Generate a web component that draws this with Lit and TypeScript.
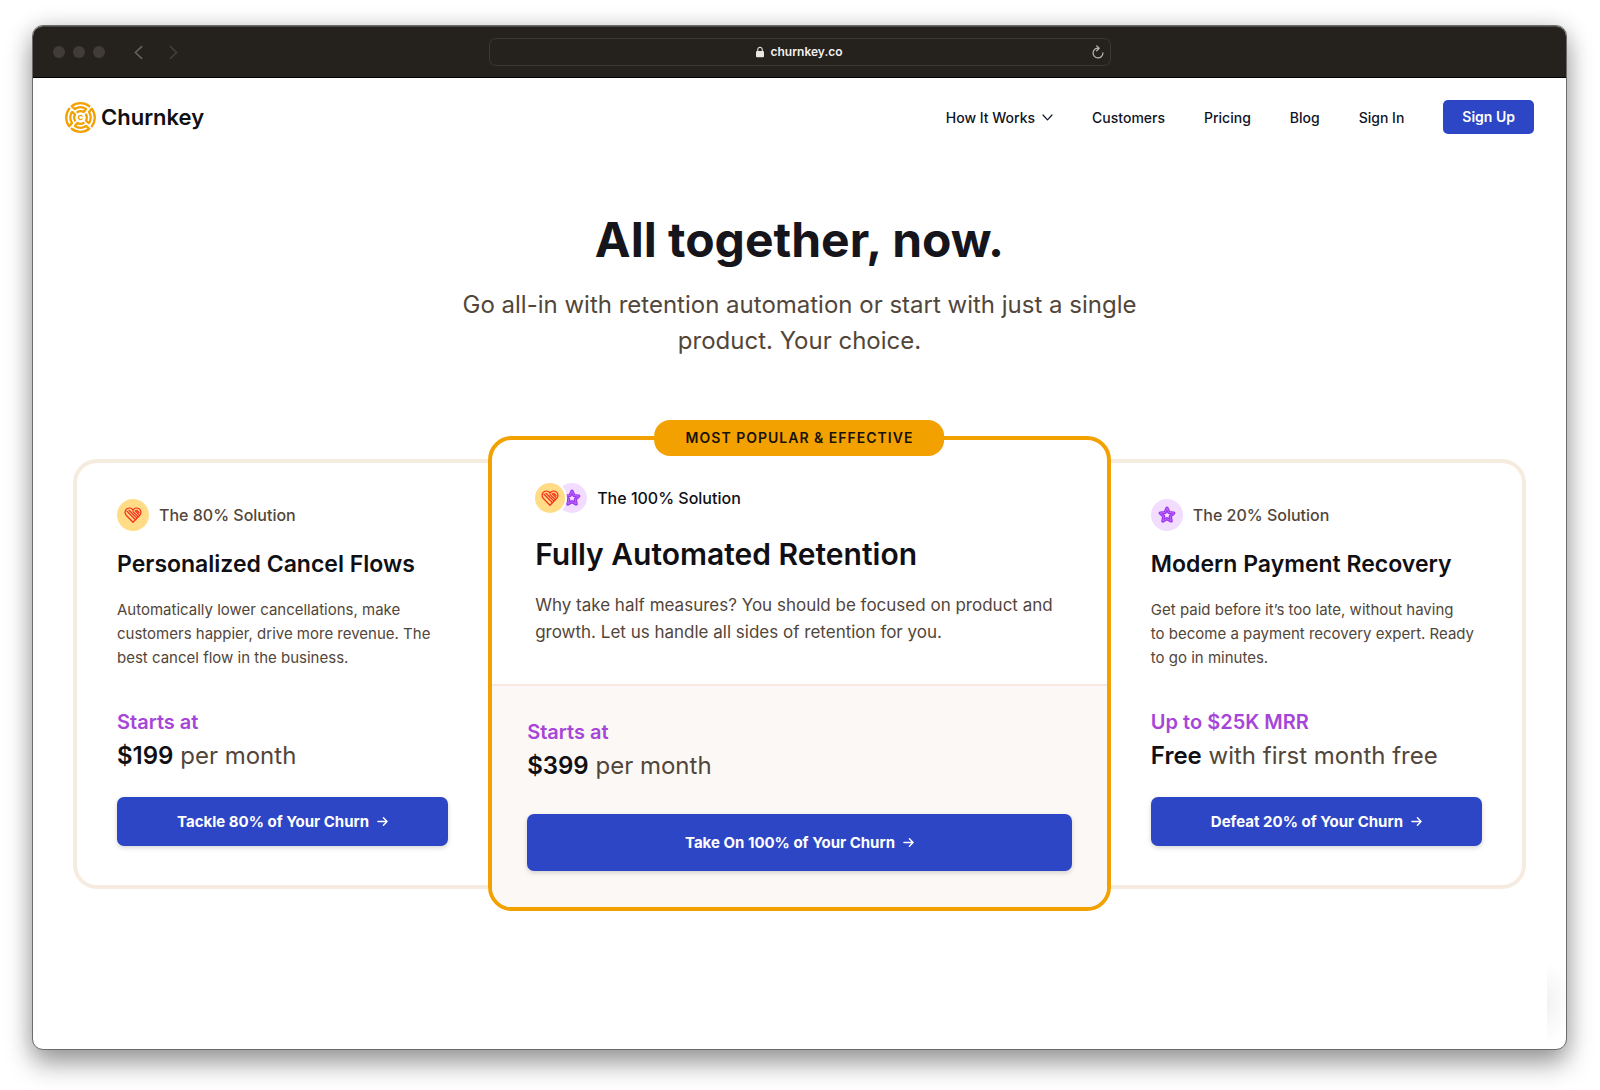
import { LitElement, html, css, svg, nothing } from "lit";
import { customElement, property } from "lit/decorators.js";

type IconName = "heart" | "star";

interface Plan {
  icons: IconName[];
  label: string;
  title: string;
  text: string;
  note: string;
  price: string;
  terms: string;
  action: string;
  featured?: boolean;
}

const PLANS: Plan[] = [
  {
    icons: ["heart"],
    label: "The 80% Solution",
    title: "Personalized Cancel Flows",
    text: "Automatically lower cancellations, make customers happier, drive more revenue. The best cancel flow in the business.",
    note: "Starts at",
    price: "$199",
    terms: "per month",
    action: "Tackle 80% of Your Churn",
  },
  {
    icons: ["heart", "star"],
    label: "The 100% Solution",
    title: "Fully Automated Retention",
    text: "Why take half measures? You should be focused on product and growth. Let us handle all sides of retention for you.",
    note: "Starts at",
    price: "$399",
    terms: "per month",
    action: "Take On 100% of Your Churn",
    featured: true,
  },
  {
    icons: ["star"],
    label: "The 20% Solution",
    title: "Modern Payment Recovery",
    text: "Get paid before it’s too late, without having to\u00a0become a payment recovery expert. Ready to\u00a0go in minutes.",
    note: "Up to $25K MRR",
    price: "Free",
    terms: "with first month free",
    action: "Defeat 20% of Your Churn",
  },
];

const heart = svg`
  <g fill="none" stroke="#f5331f" stroke-width="1.3" stroke-linecap="round" stroke-linejoin="round">
    <path d="M9 16.2 2.2 9.2C.4 7.2.8 4 3 2.7 5 1.5 7.6 2 9 4.2c1.4-2.2 4-2.7 6-1.5 2.200 1.300 2.600 4.500.8 6.500z"/>
    <path d="M3 5.200 11 13.200M5 4.200l7.500 7.400M9 5.600l4.800 4.700M11.200 4.700l3.600 3.700M12.800 4.200l2.400 2.400"/>
  </g>`;

const star = svg`
  <g fill="none" stroke-linejoin="round">
    <path d="M9 2.200l1.900 4.300 4.900.5-3.600 3.200 1 4.800L9 12.600 4.800 15l1-4.800L2.200 7l4.900-.5z" stroke="#9d35f0" stroke-width="3.200"/>
    <path d="M9 2.200l1.900 4.300 4.900.5-3.600 3.200 1 4.800L9 12.600 4.800 15l1-4.800L2.200 7l4.900-.5z" stroke="#c98bf8" stroke-width=".6"/>
    <circle cx="9" cy="9.300" r="1.700" fill="#f3dcff"/>
  </g>`;

@customElement("plan-icon")
export class PlanIcon extends LitElement {
  @property() name: IconName = "heart";

  static styles = css`
    :host {
      display: grid;
      place-items: center;
      border-radius: 50%;
    }
    :host([name="heart"]) {
      background: #ffdc85;
    }
    :host([name="star"]) {
      background: #f2dcff;
    }
    svg {
      display: block;
      width: 18px;
      height: 18px;
    }
  `;

  render() {
    return html`<svg viewBox="0 0 18 18" aria-hidden="true">${this.name === "heart" ? heart : star}</svg>`;
  }
}

@customElement("plan-card")
export class PlanCard extends LitElement {
  @property({ attribute: false }) plan!: Plan;

  static styles = css`
    :host {
      display: block;
      box-sizing: border-box;
      min-width: 0;
      border: 4px solid #f6ebdf;
      background: #fff;
      color: #52463a;
    }
    :host(.first) {
      border-right: 0;
      border-radius: 24px 0 0 24px;
    }
    :host(.last) {
      border-left: 0;
      border-radius: 0 24px 24px 0;
    }
    :host(.featured) {
      position: relative;
      border-color: #f2a100;
      border-radius: 24px;
    }
    .badge {
      position: absolute;
      top: -20px;
      left: 50%;
      translate: -50% 0;
      box-sizing: border-box;
      padding: 0 31px;
      border-radius: 16px;
      background: #f2a100;
      color: #17130a;
      font-size: 14px;
      font-weight: 600;
      line-height: 36px;
      letter-spacing: 1px;
      white-space: nowrap;
    }
    .about {
      padding: 36px 36px 0 40px;
    }
    .head {
      display: flex;
      align-items: center;
      gap: 10px;
      height: 32px;
    }
    .icons {
      display: flex;
    }
    plan-icon {
      width: 32px;
      height: 32px;
    }
    .label {
      font-size: 16px;
      font-weight: 500;
      line-height: 24px;
    }
    h2 {
      margin: 17px 0 0;
      color: #101014;
      font-size: 23px;
      font-weight: 600;
      line-height: 32px;
    }
    .text {
      margin: 18px 0 0;
      font-size: 15px;
      line-height: 24px;
    }
    .buy {
      padding: 36px 40px 39px;
    }
    .note {
      margin: 0;
      color: #a646d8;
      font-size: 20px;
      font-weight: 600;
      line-height: 32px;
    }
    .price {
      margin: 0;
      font-size: 24px;
      line-height: 36px;
    }
    .price strong {
      color: #101014;
      font-weight: 600;
    }
    .action {
      display: flex;
      align-items: center;
      justify-content: center;
      gap: 8px;
      box-sizing: border-box;
      margin-top: 23px;
      min-height: 49px;
      border-radius: 7px;
      background: #2d46c6;
      box-shadow: 0 2px 5px rgb(0 0 0 / 16%);
      color: #fff;
      font-size: 15px;
      font-weight: 700;
      text-decoration: none;
    }
    .action svg {
      width: 11px;
      height: 11px;
    }

    :host(.featured) .about {
      padding: 43px 40px 38px 43px;
    }
    :host(.featured) .head {
      height: 30px;
    }
    :host(.featured) plan-icon {
      width: 30px;
      height: 30px;
    }
    :host(.featured) plan-icon[name="heart"] {
      z-index: 1;
      box-shadow: 0 0 0 2px #fff;
    }
    :host(.featured) plan-icon[name="star"] {
      margin-left: -8px;
    }
    :host(.featured) .label {
      color: #101014;
    }
    :host(.featured) h2 {
      margin-top: 21px;
      font-size: 30px;
      line-height: 40px;
    }
    :host(.featured) .text {
      font-size: 17px;
      line-height: 27px;
    }
    :host(.featured) .buy {
      padding: 30px 35px 36px;
      border-top: 2px solid #f6e9e1;
      border-radius: 0 0 20px 20px;
      background: #fcf8f5;
    }
    :host(.featured) .action {
      margin-top: 30px;
      min-height: 57px;
    }
  `;

  render() {
    const p = this.plan;
    return html`
      ${p.featured ? html`<div class="badge">MOST POPULAR &amp; EFFECTIVE</div>` : nothing}
      <div class="about">
        <div class="head">
          <div class="icons">${p.icons.map((name) => html`<plan-icon name=${name}></plan-icon>`)}</div>
          <span class="label">${p.label}</span>
        </div>
        <h2>${p.title}</h2>
        <p class="text">${p.text}</p>
      </div>
      <div class="buy">
        <p class="note">${p.note}</p>
        <p class="price"><strong>${p.price}</strong> ${p.terms}</p>
        <a class="action" href="#start">
          ${p.action}
          <svg viewBox="0 0 12 12" fill="none" stroke="currentColor" stroke-width="1.500" stroke-linecap="round" stroke-linejoin="round" aria-hidden="true">
            <path d="M1 6h10M7 2l4 4-4 4" />
          </svg>
        </a>
      </div>
    `;
  }
}

/* One quarter of the logo: a band that folds back twice towards the centre. */
const wing = svg`
  <path d="M23.500 4.100A13.800 13.800 0 0 0 6.500 4.100L9.600 6.800A9.900 9.900 0 0 1 20.400 6.800L18 9.700A6.200 6.200 0 0 0 12 9.700"/>`;

@customElement("app-root")
export class AppRoot extends LitElement {
  static styles = css`
    :host {
      display: block;
      box-sizing: border-box;
      min-height: 100vh;
      padding: 25px 33px 40px 32px;
      background: #fff;
      font-family: Inter, "Liberation Sans", sans-serif;
    }
    .window {
      position: relative;
      display: flex;
      flex-direction: column;
      box-sizing: border-box;
      min-height: calc(100vh - 65px);
      border: 1px solid #6b6b6b;
      border-radius: 11px;
      background: #fff;
      box-shadow: 0 14px 26px rgb(0 0 0 / 36%), 0 0 22px rgb(0 0 0 / 14%);
    }
    .bar {
      display: grid;
      grid-template-columns: 1fr minmax(0, 622px) 1fr;
      align-items: center;
      box-sizing: border-box;
      height: 52px;
      padding: 0 20px;
      border-top: 1px solid #4c4a47;
      border-bottom: 1px solid #000;
      border-radius: 10px 10px 0 0;
      background: #25211c;
    }
    .controls,
    .dots {
      display: flex;
      align-items: center;
    }
    .dots {
      gap: 8px;
      margin-right: 23px;
    }
    .dot {
      width: 12px;
      height: 12px;
      border-radius: 50%;
      background: #423c38;
    }
    .step {
      display: grid;
      place-items: center;
      width: 20px;
      height: 20px;
      margin-right: 15px;
      padding: 0;
      border: 0;
      background: none;
      color: #67625e;
    }
    .step:disabled {
      color: #423e3a;
    }
    .step svg {
      width: 9px;
      height: 15px;
    }
    .address {
      display: grid;
      grid-template-columns: 1fr auto 1fr;
      align-items: center;
      box-sizing: border-box;
      height: 28px;
      padding: 0 4px;
      border: 1px solid #3c3834;
      border-radius: 7px;
    }
    .site {
      grid-column: 2;
      display: flex;
      align-items: center;
      gap: 6px;
      color: #e8e6e4;
    }
    .site svg {
      width: 8px;
      height: 12px;
    }
    .site input {
      field-sizing: content;
      padding: 0;
      border: 0;
      outline: 0;
      background: none;
      color: #f2f0ee;
      font: 600 12px/18px Inter, "Liberation Sans", sans-serif;
    }
    .reload {
      justify-self: end;
      display: grid;
      place-items: center;
      width: 16px;
      height: 20px;
      padding: 0;
      border: 0;
      background: none;
      color: #b5b1ad;
    }
    .reload svg {
      width: 12px;
      height: 14px;
    }
    .header {
      display: flex;
      align-items: center;
      justify-content: space-between;
      padding: 22px 32px;
    }
    .brand {
      display: flex;
      align-items: center;
      gap: 5px;
      color: #101014;
      font-size: 22px;
      font-weight: 600;
      line-height: 34px;
      text-decoration: none;
    }
    .brand svg {
      width: 31px;
      height: 31px;
    }
    .nav {
      display: flex;
      align-items: center;
      gap: 39px;
      color: #101425;
      font-size: 14px;
      font-weight: 500;
    }
    .nav a {
      color: inherit;
      text-decoration: none;
    }
    .nav button {
      display: flex;
      align-items: center;
      gap: 7px;
      padding: 0;
      border: 0;
      background: none;
      color: inherit;
      font: inherit;
    }
    .nav button svg {
      width: 11px;
      height: 7px;
    }
    .nav .signup {
      padding: 0 19px;
      border-radius: 5px;
      background: #2d46c6;
      color: #fff;
      font-weight: 600;
      line-height: 34px;
    }
    .hero {
      padding: 56px 32px 0;
      text-align: center;
    }
    h1 {
      margin: 0;
      color: #15151b;
      font-size: 48px;
      font-weight: 700;
      line-height: 56px;
    }
    .lead {
      max-width: 690px;
      margin: 19px auto 0;
      color: #52463a;
      font-size: 24px;
      line-height: 36px;
    }
    .plans {
      display: grid;
      grid-template-columns: 2fr 3fr 2fr;
      align-items: center;
      padding: 77px 40px 136px;
    }
    .glow {
      position: absolute;
      right: 0;
      bottom: 4px;
      width: 19px;
      height: 84px;
      background: radial-gradient(ellipse 24px 42px at 0 50%, rgb(0 0 0 / 5%), rgb(0 0 0 / 0%));
    }
  `;

  render() {
    return html`
      <div class="window">
        <div class="bar">
          <div class="controls">
            <div class="dots"><span class="dot"></span><span class="dot"></span><span class="dot"></span></div>
            <button class="step" aria-label="Back">
              <svg viewBox="0 0 10 16" fill="none" stroke="currentColor" stroke-width="1.800" stroke-linecap="round" stroke-linejoin="round"><path d="M8.500 1.500 1.500 8l7 6.500" /></svg>
            </button>
            <button class="step" aria-label="Forward" disabled>
              <svg viewBox="0 0 10 16" fill="none" stroke="currentColor" stroke-width="1.800" stroke-linecap="round" stroke-linejoin="round"><path d="m1.500 1.500 7 6.500-7 6.500" /></svg>
            </button>
          </div>
          <div class="address">
            <div class="site">
              <svg viewBox="0 0 9 13" aria-hidden="true">
                <path d="M2 6V3.600a2.500 2.500 0 0 1 5 0V6" fill="none" stroke="currentColor" stroke-width="1.200" />
                <rect y="5.500" width="9" height="7" rx="1.200" fill="currentColor" />
              </svg>
              <input aria-label="Address" size="10" .value=${"churnkey.co"} />
            </div>
            <button class="reload" aria-label="Reload">
              <svg viewBox="0 0 12 14" fill="none" stroke="currentColor" stroke-width="1.300" stroke-linecap="round" stroke-linejoin="round"><path d="M6.500 3.200A4.900 4.900 0 1 0 10.900 8M4.700.9l2.500 2.400-2.500 2.500" /></svg>
            </button>
          </div>
        </div>

        <header class="header">
          <a class="brand" href="#home">
            <svg viewBox="0 0 30 30" fill="none" stroke="#f2a100" stroke-width="2.200" stroke-linecap="round" stroke-linejoin="round" aria-hidden="true">
              <g>${wing}</g>
              <g transform="rotate(90 15 15)">${wing}</g>
              <g transform="rotate(180 15 15)">${wing}</g>
              <g transform="rotate(270 15 15)">${wing}</g>
              <path d="M16.500 13.700a2 2 0 1 0 0 2.600" stroke-width="1.300" />
            </svg>
            Churnkey
          </a>
          <nav class="nav">
            <button>
              How It Works
              <svg viewBox="0 0 11 7" fill="none" stroke="currentColor" stroke-width="1.200" stroke-linecap="round" stroke-linejoin="round" aria-hidden="true"><path d="m1 1 4.500 4.800L10 1" /></svg>
            </button>
            <a href="#customers">Customers</a>
            <a href="#pricing">Pricing</a>
            <a href="#blog">Blog</a>
            <a href="#signin">Sign In</a>
            <a class="signup" href="#signup">Sign Up</a>
          </nav>
        </header>

        <main>
          <section class="hero">
            <h1>All together, now.</h1>
            <p class="lead">Go all-in with retention automation or start with just a single product. Your choice.</p>
          </section>
          <section class="plans">
            ${PLANS.map(
              (plan, i) => html`<plan-card class=${plan.featured ? "featured" : i === 0 ? "first" : "last"} .plan=${plan}></plan-card>`,
            )}
          </section>
        </main>
        <div class="glow"></div>
      </div>
    `;
  }
}
